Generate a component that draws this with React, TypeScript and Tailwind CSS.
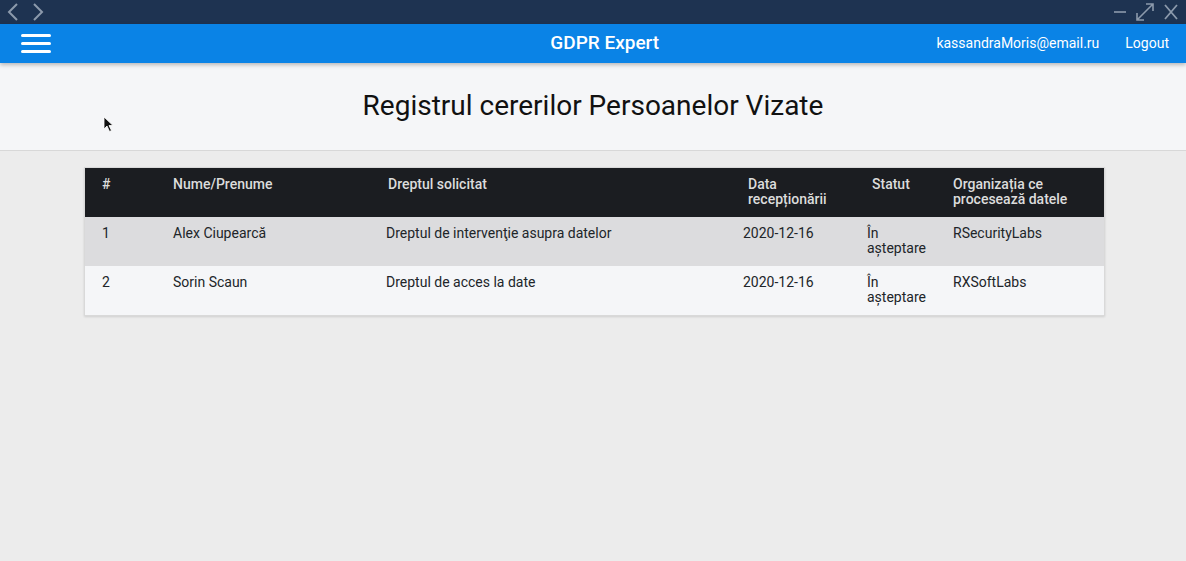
import React from "react";

const rows = [
  {
    id: 1,
    name: "Alex Ciupearcă",
    right: "Dreptul de intervenţie asupra datelor",
    date: "2020-12-16",
    status: "În așteptare",
    org: "RSecurityLabs",
  },
  {
    id: 2,
    name: "Sorin Scaun",
    right: "Dreptul de acces la date",
    date: "2020-12-16",
    status: "În așteptare",
    org: "RXSoftLabs",
  },
];

function TitleBar() {
  return (
    <div className="h-[24px] bg-[#1e3351] flex items-center justify-between px-[6px] text-[#8c9aac]">
      <div className="flex items-center gap-[13px]">
        <svg width="13" height="20" viewBox="0 0 13 20" fill="none" stroke="currentColor" strokeWidth="2">
          <path d="M11 2 L3 10 L11 18" />
        </svg>
        <svg width="13" height="20" viewBox="0 0 13 20" fill="none" stroke="currentColor" strokeWidth="2">
          <path d="M2 2 L10 10 L2 18" />
        </svg>
      </div>
      <div className="flex items-center gap-[8px] pr-[1px]">
        <svg width="14" height="18" viewBox="0 0 14 18" fill="none" stroke="currentColor" strokeWidth="1.6">
          <path d="M1 9 H13" />
        </svg>
        <svg width="20" height="20" viewBox="0 0 20 20" fill="none" stroke="currentColor" strokeWidth="1.6">
          <path d="M2 18 L18 2 M11 2 H18 V9 M2 11 V18 H9" />
        </svg>
        <svg width="16" height="18" viewBox="0 0 16 18" fill="none" stroke="currentColor" strokeWidth="1.8">
          <path d="M2 2 L14 16 M14 2 L2 16" />
        </svg>
      </div>
    </div>
  );
}

function Header() {
  return (
    <div className="relative z-10 h-[39px] bg-[#0a83e6] flex items-center pl-[21px] pr-[17px] text-white shadow-[0_2px_4px_rgba(0,0,0,0.25)]">
      <div className="flex flex-col gap-[5px] w-[30px]">
        <span className="block h-[3px] bg-white rounded-sm" />
        <span className="block h-[3px] bg-white rounded-sm" />
        <span className="block h-[3px] bg-white rounded-sm" />
      </div>
      <div className="flex-1 text-center text-[19px] font-medium pl-[222px]">GDPR Expert</div>
      <div className="flex items-center gap-[26px] text-[14px]">
        <span>kassandraMoris@email.ru</span>
        <span>Logout</span>
      </div>
    </div>
  );
}

export default function App() {
  return (
    <div
      className="relative w-[1186px] h-[561px] overflow-hidden bg-[#ececec] text-[#212529]"
      style={{ fontFamily: "Roboto, 'Noto Sans', sans-serif" }}
    >
      <TitleBar />
      <Header />

      <div className="h-[88px] bg-[#f5f6f8] border-b border-[#d8d8d8] flex items-center justify-center">
        <h1 className="text-[28px] text-[#111] pb-[1px]">Registrul cererilor Persoanelor Vizate</h1>
      </div>

      <div className="ml-[84px] mt-[16px] w-[1021px] border border-[#d9d9d9] shadow-[0_1px_2px_rgba(0,0,0,0.12)] text-[14px] leading-[15px]">
        <div className="flex h-[49px] bg-[#1b1d21] text-[#dcdcdc] font-medium">
          <div className="w-[71px] pl-[17px] pt-[9px]">#</div>
          <div className="w-[213px] pl-[17px] pt-[9px]">Nume/Prenume</div>
          <div className="w-[357px] pl-[19px] pt-[9px]">Dreptul solicitat</div>
          <div className="w-[124px] pl-[22px] pt-[9px]">Data recepționării</div>
          <div className="w-[86px] pl-[22px] pt-[9px]">Statut</div>
          <div className="flex-1 pl-[17px] pt-[9px]">Organizația ce procesează datele</div>
        </div>
        {rows.map((r, i) => (
          <div key={r.id} className={`flex h-[49px] ${i % 2 === 0 ? "bg-[#dcdcde]" : "bg-[#f5f6f8]"}`}>
            <div className="w-[71px] pl-[17px] pt-[9px]">{r.id}</div>
            <div className="w-[213px] pl-[17px] pt-[9px]">{r.name}</div>
            <div className="w-[357px] pl-[17px] pt-[9px]">{r.right}</div>
            <div className="w-[124px] pl-[17px] pt-[9px]">{r.date}</div>
            <div className="w-[86px] pl-[17px] pr-[8px] pt-[9px]">{r.status}</div>
            <div className="flex-1 pl-[17px] pt-[9px]">{r.org}</div>
          </div>
        ))}
      </div>

      {/* mouse pointer captured in the screenshot */}
      <svg className="absolute left-[103px] top-[116px]" width="12" height="17" viewBox="0 0 12 17">
        <path d="M1 1 L1 13 L4 10 L6.5 15.5 L8.5 14.5 L6 9.5 L10 9.5 Z" fill="#111" stroke="#fff" strokeWidth="0.8" />
      </svg>
    </div>
  );
}
